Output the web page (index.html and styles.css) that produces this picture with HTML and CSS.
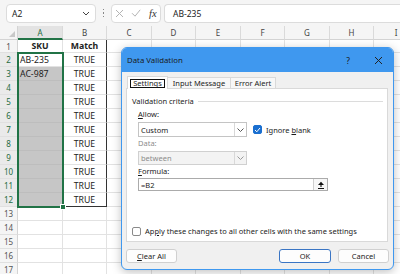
FILE: index.html
```html
<!DOCTYPE html>
<html lang="en">

<head>
    <meta charset="UTF-8" />
    <title>Data Validation</title>
    <link rel="stylesheet" href="styles.css">
</head>

<body>
    <div class="app">

        <!-- Name box + formula bar -->
        <div class="toolbar">
            <div class="name-box">
                <span>A2</span>
                <svg width="8" height="5" viewBox="0 0 8 5"><path d="M1 1l3 3 3-3" fill="none" stroke="#444" stroke-width="1" /></svg>
            </div>
            <div class="grip"><i></i><i></i><i></i></div>
            <div class="fx-box">
                <svg width="9" height="9" viewBox="0 0 9 9"><path d="M1 1l7 7M8 1l-7 7" stroke="#b4b4b4" stroke-width="1" /></svg>
                <svg width="10" height="8" viewBox="0 0 10 8"><path d="M1 4.2l3 3 5.2-6.4" fill="none" stroke="#b4b4b4" stroke-width="1" /></svg>
                <span class="fx">fx</span>
            </div>
            <div class="formula-bar">AB-235</div>
        </div>

        <!-- Worksheet -->
        <div class="sheet">
            <div class="corner"></div><div class="ch on">A</div><div class="ch">B</div><div class="ch">C</div><div class="ch">D</div><div class="ch">E</div><div class="ch">F</div><div class="ch">G</div><div class="ch">H</div><div class="ch">I</div>

            <div class="rh">1</div><div class="hd">SKU</div><div class="hd rb">Match</div><div></div><div></div><div></div><div></div><div></div><div></div><div></div>
            <div class="rh on">2</div><div class="tx">AB-235</div><div class="tr rb">TRUE</div><div></div><div></div><div></div><div></div><div></div><div></div><div></div>
            <div class="rh on">3</div><div class="tx sel">AC-987</div><div class="tr rb">TRUE</div><div></div><div></div><div></div><div></div><div></div><div></div><div></div>
            <div class="rh on">4</div><div class="sel"></div><div class="tr rb">TRUE</div><div></div><div></div><div></div><div></div><div></div><div></div><div></div>
            <div class="rh on">5</div><div class="sel"></div><div class="tr rb">TRUE</div><div></div><div></div><div></div><div></div><div></div><div></div><div></div>
            <div class="rh on">6</div><div class="sel"></div><div class="tr rb">TRUE</div><div></div><div></div><div></div><div></div><div></div><div></div><div></div>
            <div class="rh on">7</div><div class="sel"></div><div class="tr rb">TRUE</div><div></div><div></div><div></div><div></div><div></div><div></div><div></div>
            <div class="rh on">8</div><div class="sel"></div><div class="tr rb">TRUE</div><div></div><div></div><div></div><div></div><div></div><div></div><div></div>
            <div class="rh on">9</div><div class="sel"></div><div class="tr rb">TRUE</div><div></div><div></div><div></div><div></div><div></div><div></div><div></div>
            <div class="rh on">10</div><div class="sel"></div><div class="tr rb">TRUE</div><div></div><div></div><div></div><div></div><div></div><div></div><div></div>
            <div class="rh on">11</div><div class="sel"></div><div class="tr rb">TRUE</div><div></div><div></div><div></div><div></div><div></div><div></div><div></div>
            <div class="rh on">12</div><div class="sel bb"></div><div class="tr rb bb">TRUE</div><div></div><div></div><div></div><div></div><div></div><div></div><div></div>
            <div class="rh">13</div><div></div><div></div><div></div><div></div><div></div><div></div><div></div><div></div><div></div>
            <div class="rh">14</div><div></div><div></div><div></div><div></div><div></div><div></div><div></div><div></div><div></div>
            <div class="rh">15</div><div></div><div></div><div></div><div></div><div></div><div></div><div></div><div></div><div></div>
            <div class="rh">16</div><div></div><div></div><div></div><div></div><div></div><div></div><div></div><div></div><div></div>
            <div class="rh">17</div><div></div><div></div><div></div><div></div><div></div><div></div><div></div><div></div><div></div>

            <!-- selection A2:A12 -->
            <span class="selection"><span class="handle"></span></span>
        </div>

        <!-- Data Validation dialog -->
        <div class="dialog">
            <div class="dlg-title">
                <span class="dlg-name">Data Validation</span>
                <span class="dlg-btn">?</span>
                <span class="dlg-btn">
                    <svg width="9" height="9" viewBox="0 0 9 9"><path d="M1 1l7 7M8 1l-7 7" stroke="#222" stroke-width="1" /></svg>
                </span>
            </div>

            <div class="tabs">
                <span class="tab active" style="width:41px"><span class="focus">Settings</span></span>
                <span class="tab" style="width:64px">Input Message</span>
                <span class="tab" style="width:46px">Error Alert</span>
            </div>

            <div class="panel">
                <div class="group-head">Validation criteria</div>
                <div class="criteria">
                    <div class="lbl"><u>A</u>llow:</div>
                    <div class="row">
                        <div class="combo">
                            <span>Custom</span>
                            <span class="drop"><svg width="7" height="4" viewBox="0 0 7 4"><path d="M.5 .5l3 3 3-3" fill="none" stroke="#555" stroke-width="1" /></svg></span>
                        </div>
                        <div class="check">
                            <span class="box on"><svg width="7" height="6" viewBox="0 0 7 6"><path d="M1 3l1.8 1.8L6 1" fill="none" stroke="#fff" stroke-width="1" /></svg></span>
                            <span>Ignore <u>b</u>lank</span>
                        </div>
                    </div>
                    <div class="lbl muted">Data:</div>
                    <div class="combo disabled">
                        <span>between</span>
                        <span class="drop"><svg width="7" height="4" viewBox="0 0 7 4"><path d="M.5 .5l3 3 3-3" fill="none" stroke="#999" stroke-width="1" /></svg></span>
                    </div>
                    <div class="lbl formula-lbl"><u>F</u>ormula:</div>
                    <div class="input">
                        <span>=B2</span>
                        <span class="ref-btn">
                            <svg width="8" height="8" viewBox="0 0 8 8"><path d="M4 .8L7 4H1z" fill="#111" /><path d="M4 3.5v2.6M1 7.5h6" stroke="#111" stroke-width="1.1" /></svg>
                        </span>
                    </div>
                </div>
                <div class="check apply">
                    <span class="box"></span>
                    <span>Ap<u>p</u>ly these changes to all other cells with the same settings</span>
                </div>
            </div>

            <div class="actions">
                <span class="btn"><span><u>C</u>lear All</span></span>
                <span class="btn-group">
                    <span class="btn primary">OK</span>
                    <span class="btn">Cancel</span>
                </span>
            </div>
        </div>

    </div>
</body>

</html>
```

FILE: styles.css
```css
/* === Base === */
* {
    margin: 0;
    padding: 0;
    box-sizing: border-box;
}

body {
    font-family: 'Noto Sans', sans-serif;
    background-color: #FFFFFF;
    color: #222222;
    overflow: hidden;
}

.app {
    position: relative;
    width: 400px;
    height: 274px;
    overflow: hidden;
}

/* === Toolbar (name box + formula bar) === */
.toolbar {
    height: 26px;
    display: flex;
    align-items: center;
    padding-left: 6px;
    background-color: #F5F5F5;
}

.name-box {
    width: 90px;
    height: 19px;
    display: flex;
    align-items: center;
    justify-content: space-between;
    padding: 0 5px;
    background-color: #FFFFFF;
    border: 1px solid #DCDCDC;
    border-radius: 4px;
    font-size: 8.5px;
}

.grip {
    width: 15px;
    display: flex;
    flex-direction: column;
    align-items: center;
    gap: 2px;
}

.grip i {
    width: 1.5px;
    height: 1.5px;
    background-color: #888888;
}

.fx-box {
    width: 50px;
    height: 19px;
    display: flex;
    align-items: center;
    gap: 7px;
    padding-left: 3px;
    background-color: #FFFFFF;
    border: 1px solid #DCDCDC;
    border-radius: 4px;
}

.fx {
    font-family: 'Liberation Serif', serif;
    font-style: italic;
    font-size: 10.5px;
    color: #333333;
    margin-left: 1px;
}

.formula-bar {
    flex: 1;
    height: 19px;
    margin-left: 3px;
    display: flex;
    align-items: center;
    padding-left: 8px;
    background-color: #FFFFFF;
    border: 1px solid #DCDCDC;
    border-right: none;
    border-radius: 4px 0 0 4px;
    font-size: 8.5px;
}

/* === Worksheet grid === */
.sheet {
    position: relative;
    display: grid;
    grid-template-columns: 18px 45px 44px 45px 44px 45px 44px 45px 44px 45px;
    grid-template-rows: 14px 13px repeat(16, 14px);
    font-size: 8.7px;
    color: #222222;
}

.sheet > div {
    display: flex;
    align-items: center;
    white-space: nowrap;
    border-right: 1px solid #E2E2E2;
    border-bottom: 1px solid #E2E2E2;
}

.sheet > .corner {
    background-color: #F5F5F5;
    justify-content: flex-end;
    align-items: flex-end;
    padding: 0 2px 2px 0;
    border-right-color: #D4D4D4;
    border-bottom-color: #D4D4D4;
}

.corner::after {
    content: "";
    border-left: 6px solid transparent;
    border-bottom: 6px solid #C8C8C8;
}

.sheet > .ch {
    justify-content: center;
    background-color: #F5F5F5;
    color: #444444;
    font-size: 8px;
    border-right-color: #DADADA;
    border-bottom-color: #D4D4D4;
}

.sheet > .ch.on {
    background-color: #E3E3E3;
    color: #1E6B41;
    border-bottom: 2px solid #217346;
}

.sheet > .rh {
    justify-content: center;
    background-color: #F5F5F5;
    color: #555555;
    font-size: 8px;
    border-right-color: #D4D4D4;
    border-bottom-color: #E0E0E0;
}

.sheet > .rh.on {
    background-color: #EAEAEA;
    color: #1E6B41;
}

.hd {
    justify-content: center;
    font-weight: 700;
}

.tx {
    padding-left: 2px;
}

.sheet > .tr {
    justify-content: center;
}

.sheet > .sel {
    background-color: #C6C6C6;
    border-bottom-color: #BDBDBD;
}

.sheet > .rb {
    border-right-color: #333333;
}

.sheet > .bb {
    border-bottom-color: #333333;
}

.selection {
    position: absolute;
    left: 17px;
    top: 26px;
    width: 47px;
    height: 156px;
    border: 2px solid #217346;
}

.handle {
    position: absolute;
    right: -4px;
    bottom: -4px;
    width: 6px;
    height: 6px;
    background-color: #217346;
    border: 1px solid #FFFFFF;
}

/* === Dialog === */
.dialog {
    position: absolute;
    left: 121px;
    top: 47px;
    width: 273px;
    height: 223px;
    display: flex;
    flex-direction: column;
    background-color: #F0F0F0;
    border: 1px solid #3F98EF;
    border-radius: 6px;
    overflow: hidden;
    box-shadow: 0 2px 10px rgba(0, 0, 0, 0.25);
    font-size: 7.5px;
    color: #1B1B1B;
}

.dlg-title {
    height: 24px;
    flex: none;
    display: flex;
    align-items: center;
    padding-left: 5px;
    background-color: #3F98EF;
    font-size: 7.8px;
}

.dlg-name {
    flex: 1;
}

.dlg-btn {
    width: 30px;
    height: 100%;
    display: flex;
    align-items: center;
    justify-content: center;
    font-size: 8.5px;
}

/* tabs */
.tabs {
    position: relative;
    z-index: 1;
    display: flex;
    height: 13px;
    margin: 4px 0 0 5px;
}

.tab {
    height: 11px;
    margin-top: 1px;
    margin-right: -1px;
    display: flex;
    align-items: center;
    justify-content: center;
    background-color: #F7F7F7;
    border: 1px solid #D9D9D9;
    border-bottom: none;
}

.tab.active {
    height: 13px;
    margin-top: 0;
    background-color: #FFFFFF;
}

.focus {
    border: 1px solid #111111;
    padding: 0 2px;
    line-height: 7px;
    height: 9px;
}

.panel {
    height: 154px;
    margin: -1px 5px 0 4px;
    display: flex;
    flex-direction: column;
    background-color: #FFFFFF;
    border: 1px solid #D9D9D9;
}

.group-head {
    height: 10px;
    margin: 7px 4px 0 5px;
    display: flex;
    align-items: center;
}

.group-head::after {
    content: "";
    flex: 1;
    margin-left: 4px;
    border-top: 1px solid #DCDCDC;
}

.criteria {
    display: flex;
    flex-direction: column;
    align-items: flex-start;
    padding-left: 11px;
}

.lbl {
    height: 10px;
    line-height: 10px;
    margin-top: 3px;
}

.lbl.muted {
    margin-top: 1px;
    color: #8C8C8C;
}

.lbl.formula-lbl {
    margin-top: 1px;
}

.row {
    display: flex;
    align-items: center;
    margin-top: 3px;
}

.combo {
    width: 109px;
    height: 15px;
    display: flex;
    align-items: center;
    padding-left: 2px;
    background-color: #FFFFFF;
    border: 1px solid #C4C4C4;
}

.combo.disabled {
    height: 14px;
    margin-top: 3px;
    background-color: #F3F3F3;
    border-color: #D0D0D0;
    color: #8C8C8C;
}

.drop {
    width: 12px;
    height: 100%;
    margin-left: auto;
    display: flex;
    align-items: center;
    justify-content: center;
    border-left: 1px solid #D8D8D8;
}

.check {
    display: flex;
    align-items: center;
    margin-left: 6px;
}

.box {
    width: 9px;
    height: 9px;
    margin-right: 4px;
    display: flex;
    align-items: center;
    justify-content: center;
    background-color: #FFFFFF;
    border: 1px solid #8A8A8A;
    border-radius: 2px;
}

.box.on {
    background-color: #1A6FD0;
    border-color: #1A6FD0;
}

.input {
    width: 190px;
    height: 13px;
    margin-top: 2px;
    display: flex;
    align-items: center;
    padding-left: 2px;
    background-color: #FFFFFF;
    border: 1px solid #ABABAB;
}

.ref-btn {
    width: 14px;
    height: 100%;
    margin-left: auto;
    display: flex;
    align-items: center;
    justify-content: center;
    background-color: #F7F7F7;
    border-left: 1px solid #CFCFCF;
}

.check.apply {
    height: 10px;
    margin: auto 0 5px 5px;
}

/* buttons */
.actions {
    display: flex;
    justify-content: space-between;
    margin: 7px 4px 0 4px;
}

.btn-group {
    display: flex;
    gap: 7px;
}

.btn {
    width: 51px;
    height: 14px;
    display: flex;
    align-items: center;
    justify-content: center;
    background-color: #FDFDFD;
    border: 1px solid #D0D0D0;
    border-radius: 3px;
}

.btn.primary {
    width: 52px;
    border-color: #3A75C4;
}
```
